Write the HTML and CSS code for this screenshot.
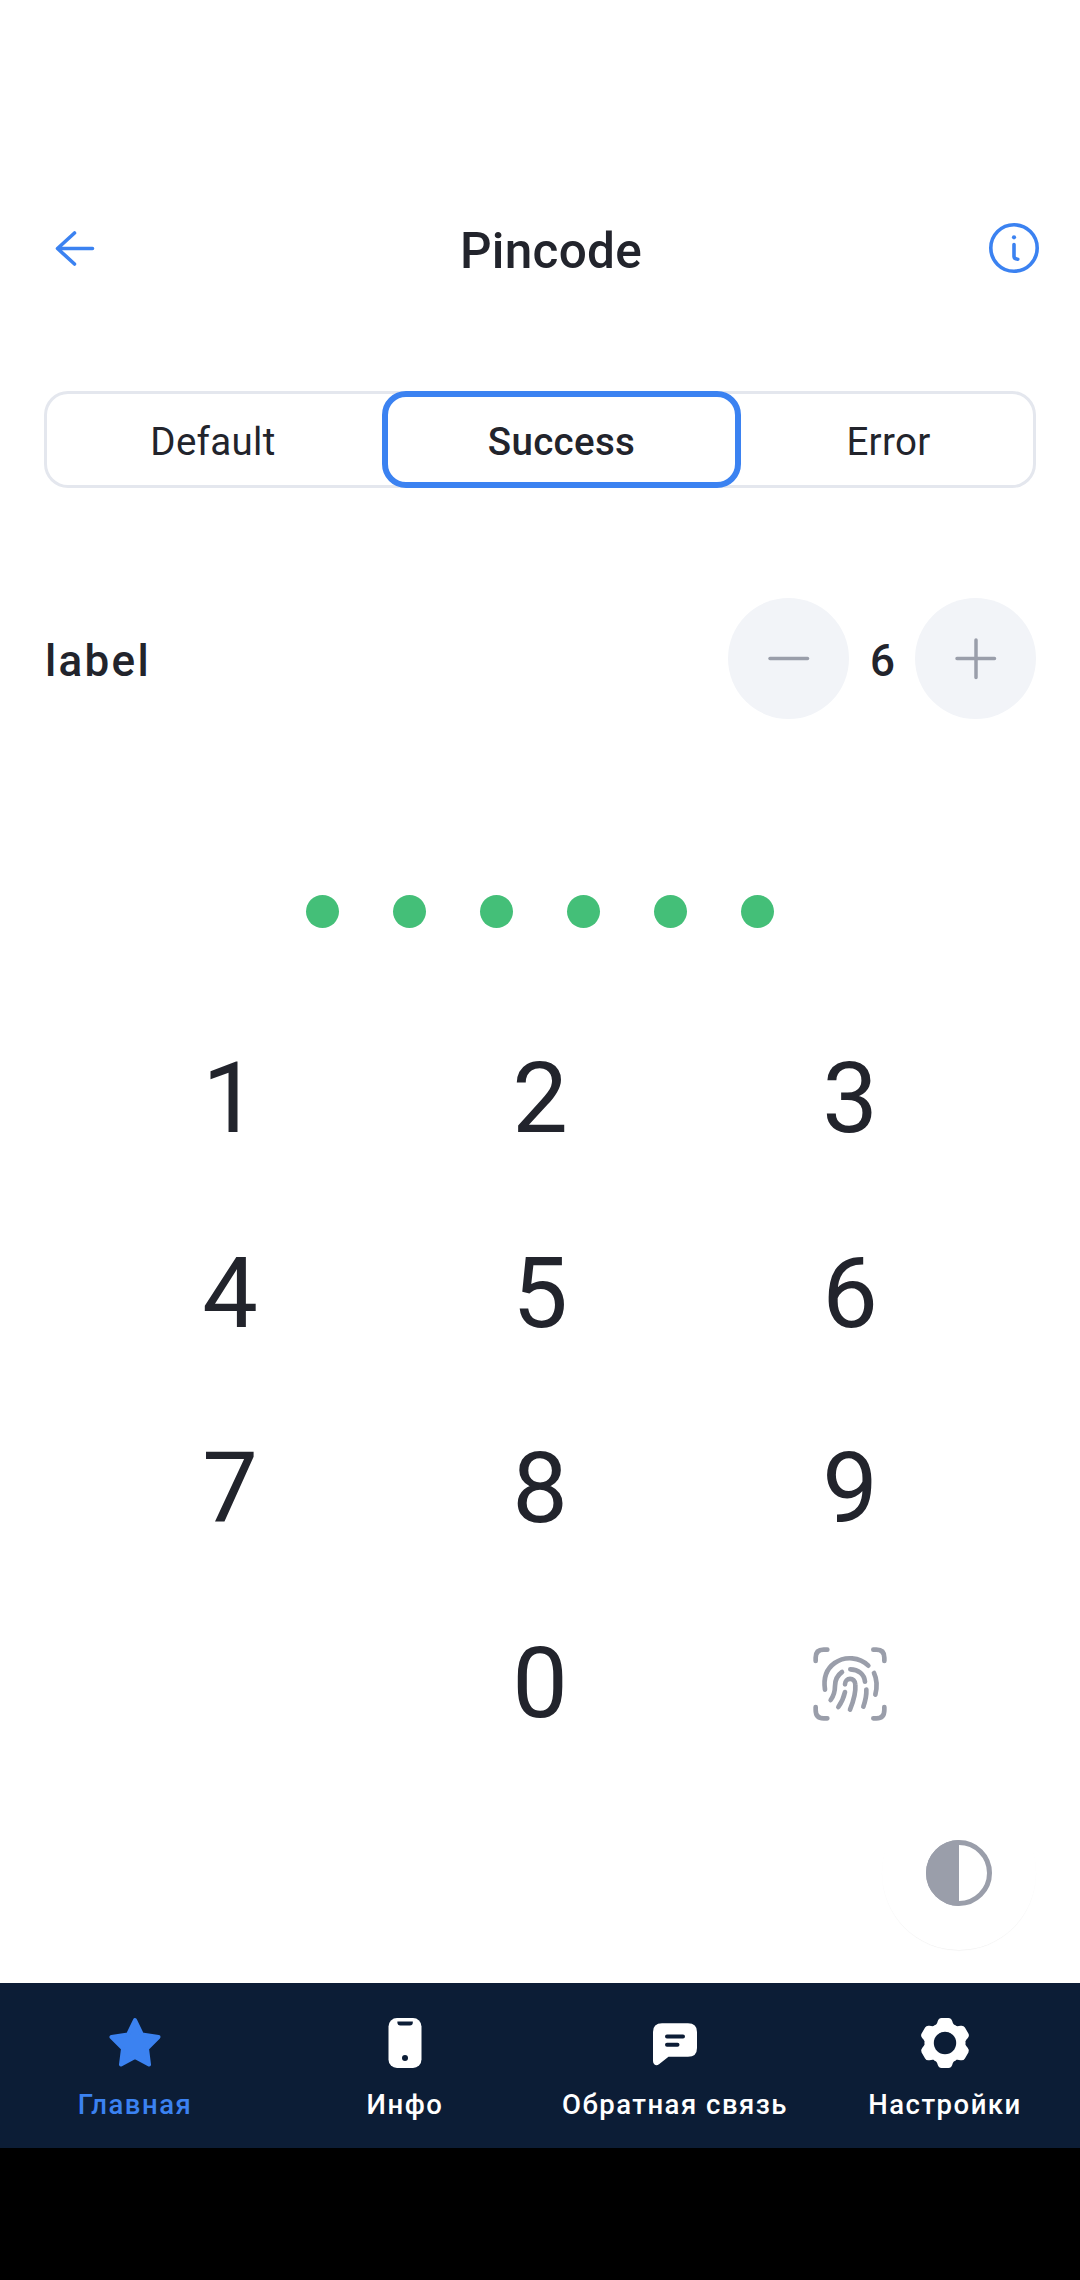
FILE: index.html
```html
<!DOCTYPE html>
<html lang="ru">
<head>
<meta charset="utf-8">
<title>Pincode</title>
<link rel="stylesheet" href="styles.css">
</head>
<body>
<div class="app">
  <header class="header">
    <button class="icon-button" aria-label="Back">
      <svg width="66" height="66" viewBox="0 0 66 66" class="line-icon"><path d="M51.500 32.500H16.500M33.500 17L16.500 32.500L33.500 48"/></svg>
    </button>
    <h1 class="title">Pincode</h1>
    <button class="icon-button" aria-label="Info">
      <svg width="66" height="66" viewBox="0 0 66 66" class="line-icon"><circle cx="33" cy="32" r="23.200"/><path d="M33 28.500V40.500Q33 43 36.800 43.200"/><circle cx="33" cy="21.300" r="2.100" class="solid"/></svg>
    </button>
  </header>

  <div class="segments">
    <button class="segment segment-first">Default</button>
    <button class="segment segment-active">Success</button>
    <button class="segment segment-last">Error</button>
  </div>

  <div class="counter">
    <span class="counter-label">label</span>
    <button class="round" aria-label="Less"><svg width="66" height="66" viewBox="0 0 66 66"><path d="M14 32.500H51.500"/></svg></button>
    <span class="counter-value">6</span>
    <button class="round" aria-label="More"><svg width="66" height="66" viewBox="0 0 66 66"><path d="M14 32.500H51.500M33 14V51.500"/></svg></button>
  </div>

  <div class="dots"><i class="dot"></i><i class="dot"></i><i class="dot"></i><i class="dot"></i><i class="dot"></i><i class="dot"></i></div>

  <div class="keypad">
    <button class="key">1</button><button class="key">2</button><button class="key">3</button>
    <button class="key">4</button><button class="key">5</button><button class="key">6</button>
    <button class="key">7</button><button class="key">8</button><button class="key">9</button>
    <span></span><button class="key">0</button>
    <button class="key" aria-label="Fingerprint">
      <svg class="finger" width="75" height="75" viewBox="98 78 225 225">
        <path d="M106 123V113Q106 89 130 89H141M279 89H288Q312 89 312 113V123M106 261V270Q106 295 130 295H141M279 295H288Q312 295 312 270V261"/>
        <path d="M134 209C128 170 142 144 163 129C194 107 238 111 264 137"/>
        <path d="M281 159C290 178 291 200 285 224"/>
        <path d="M185 156C171 166 164 178 164 198C164 217 159 229 151 240"/>
        <path d="M210 148C234 148 252 163 254 185"/>
        <path d="M194 193C194 172 224 170 225 194C227 220 218 247 209 269"/>
        <path d="M194 216C190 234 184 247 174 261"/>
        <path d="M258 209C259 229 254 246 249 260"/>
      </svg>
    </button>
  </div>

  <button class="fab" aria-label="Theme">
    <svg width="66" height="66" viewBox="0 0 66 66"><circle cx="33" cy="33" r="30.500" fill="none" stroke="#9a9eaa" stroke-width="5"/><path d="M33 0A33 33 0 0 0 33 66Z" fill="#9a9eaa"/></svg>
  </button>

  <nav class="tabbar">
    <a class="tab tab-active">
      <svg width="66" height="66" viewBox="0 0 66 66"><path d="M33 10L40 24.500L56.500 27L45 38.500L47 54.500L33 47L19 54.500L21 38.500L9.500 27L26 24.500Z" fill="currentColor" stroke="currentColor" stroke-width="4" stroke-linejoin="round"/></svg>
      <span>Главная</span>
    </a>
    <a class="tab">
      <svg width="66" height="66" viewBox="0 0 66 66"><rect x="16.500" y="8" width="33" height="50" rx="8.500" fill="currentColor"/><path d="M25.400 11.600H40.800V12.500Q40.800 15.500 37.800 15.500H28.400Q25.400 15.500 25.400 12.500Z" class="cut"/><circle cx="33" cy="48" r="3" class="cut"/></svg>
      <span>Инфо</span>
    </a>
    <a class="tab">
      <svg width="66" height="66" viewBox="0 0 66 66"><path d="M20 13.300H46Q55 13.300 55 22V38Q55 46.800 46 46.800H26.500L17 54.200Q14.500 56 12.500 54.500Q11 53.500 11 51V22Q11 13.300 20 13.300Z" fill="currentColor"/><path d="M25 26.500H41M25 34.700H35.500" class="cut-line"/></svg>
      <span>Обратная связь</span>
    </a>
    <a class="tab">
      <svg width="66" height="66" viewBox="-33 -33 66 66">
        <defs><path id="tooth" d="M-11 -15V-17.200C-8.500 -18 -8 -19.500 -7.200 -22Q-6.200 -25 -3.500 -25H3.500Q6.200 -25 7.200 -22C8 -19.500 8.500 -18 11 -17.200V-15Z"/></defs>
        <g fill="currentColor"><circle r="19.500"/><use href="#tooth"/><use href="#tooth" transform="rotate(60)"/><use href="#tooth" transform="rotate(120)"/><use href="#tooth" transform="rotate(180)"/><use href="#tooth" transform="rotate(240)"/><use href="#tooth" transform="rotate(300)"/></g>
        <circle r="11.200" class="cut"/>
      </svg>
      <span>Настройки</span>
    </a>
  </nav>
  <div class="system-bar"></div>
</div>
</body>
</html>
```
FILE: styles.css
```css
* { box-sizing: border-box; }

body {
  margin: 0;
  background: #fff;
  color: #22242c;
  font-family: Roboto, sans-serif;
}

button {
  margin: 0;
  padding: 0;
  border: 0;
  background: none;
  color: inherit;
  font: inherit;
}

svg { display: block; flex: none; }

.app {
  width: 1080px;
  height: 2280px;
  display: flex;
  flex-direction: column;
  overflow: hidden;
}

.header {
  display: flex;
  align-items: center;
  justify-content: space-between;
  height: 66px;
  margin: 216px 33px 0 41px;
}

.title {
  margin: 0;
  padding: 4px 0 0 14px;
  font-size: 49.5px;
  line-height: 66px;
  font-weight: 500;
  letter-spacing: 0.3px;
}

.line-icon {
  fill: none;
  stroke: #3b82f1;
  stroke-width: 3.6;
  stroke-linecap: round;
  stroke-linejoin: round;
}

.solid { fill: #3b82f1; stroke: none; }

.segments {
  display: flex;
  height: 97px;
  margin: 109px 44px 0;
  border-radius: 24px;
  box-shadow: inset 0 0 0 3px #e4e7ee;
}

.segment {
  padding-top: 4px;
  font-size: 38.5px;
  letter-spacing: 0.3px;
  border-radius: 24px;
}

.segment-first { width: 338px; }

.segment-active {
  width: 359px;
  background: #fff;
  border: 6px solid #3b82f1;
  font-weight: 500;
}

.segment-last { width: 295px; }

.counter {
  display: flex;
  align-items: center;
  height: 121px;
  margin: 110px 44px 0;
  font-size: 44px;
  font-weight: 500;
}

.counter-label {
  flex: 1;
  padding: 4px 0 0 1px;
  letter-spacing: 2.3px;
}

.counter-value {
  width: 66px;
  padding: 4px 0 0 1px;
  text-align: center;
}

.round {
  display: grid;
  place-items: center;
  width: 121px;
  height: 121px;
  border-radius: 50%;
  background: #f2f4f8;
}

.round path {
  stroke: #9a9eaa;
  stroke-width: 3.5;
  stroke-linecap: round;
}

.dots {
  display: flex;
  justify-content: center;
  gap: 54px;
  margin-top: 176px;
}

.dot {
  width: 33px;
  height: 33px;
  border-radius: 50%;
  background: #44bf78;
}

.keypad {
  display: grid;
  grid-template-columns: repeat(3, 310px);
  grid-auto-rows: 195px;
  margin: 73px 75px 0;
}

.key {
  display: flex;
  align-items: center;
  justify-content: center;
  font-size: 99px;
  line-height: 1;
}

.finger {
  fill: none;
  stroke: #9a9eaa;
  stroke-width: 14;
  stroke-linecap: round;
}

.fab {
  display: grid;
  place-items: center;
  align-self: flex-end;
  width: 154px;
  height: 154px;
  margin: 15px 44px 0 0;
  border-radius: 50%;
  background: #fff;
  box-shadow: 0 1px 1px -0.5px rgba(0, 0, 0, 0.08);
}

.tabbar {
  display: grid;
  grid-template-columns: repeat(4, 1fr);
  height: 165px;
  margin-top: auto;
  background: #0c1d36;
  color: #fff;
}

.tab {
  display: flex;
  flex-direction: column;
  align-items: center;
  padding-top: 27px;
  font-size: 27.5px;
  line-height: 34px;
  font-weight: 500;
  letter-spacing: 1.5px;
  white-space: nowrap;
}

.tab span { margin-top: 12px; }

.tab-active { color: #3b82f1; }

.cut { fill: #0c1d36; }

.cut-line {
  fill: none;
  stroke: #0c1d36;
  stroke-width: 4;
  stroke-linecap: round;
}

.system-bar { height: 132px; background: #000; }
```
